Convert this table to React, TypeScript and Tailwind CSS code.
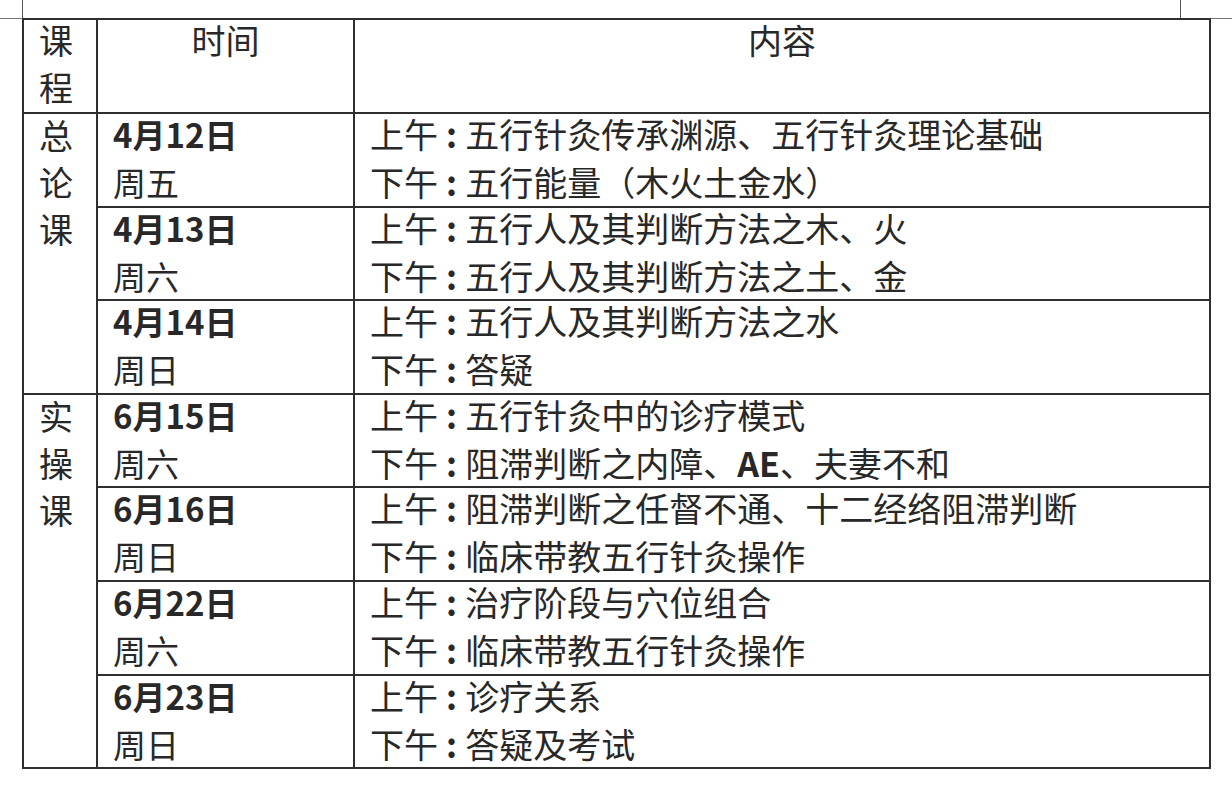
import React from 'react'

type Day = {
  date: string
  week: string
  am: React.ReactNode
  pm: React.ReactNode
}

const groups: { name: string[]; days: Day[] }[] = [
  {
    name: ['总', '论', '课'],
    days: [
      { date: '4月12日', week: '周五', am: '五行针灸传承渊源、五行针灸理论基础', pm: '五行能量（木火土金水）' },
      { date: '4月13日', week: '周六', am: '五行人及其判断方法之木、火', pm: '五行人及其判断方法之土、金' },
      { date: '4月14日', week: '周日', am: '五行人及其判断方法之水', pm: '答疑' },
    ],
  },
  {
    name: ['实', '操', '课'],
    days: [
      {
        date: '6月15日',
        week: '周六',
        am: '五行针灸中的诊疗模式',
        pm: (
          <>
            阻滞判断之内障、<b className="font-bold">AE</b>、夫妻不和
          </>
        ),
      },
      { date: '6月16日', week: '周日', am: '阻滞判断之任督不通、十二经络阻滞判断', pm: '临床带教五行针灸操作' },
      { date: '6月22日', week: '周六', am: '治疗阶段与穴位组合', pm: '临床带教五行针灸操作' },
      { date: '6月23日', week: '周日', am: '诊疗关系', pm: '答疑及考试' },
    ],
  },
]

const Label = ({ text }: { text: string }) => (
  <>
    {text}
    <span className="inline-block w-[0.8em] text-center font-bold">:</span>
  </>
)

const cell = 'border-2 border-[#2f2f2f] align-top p-0'

export default function App() {
  return (
    <div className="min-h-screen w-full bg-white text-[#282828] text-[34px] leading-[46px] font-['Noto_Sans_CJK_SC','Noto_Sans',sans-serif]">
      {/* tail of the table above */}
      <div className="w-full border-b border-[#777]">
        <div className="ml-[22px] h-[18px] w-[1159px] border-l border-r border-[#555]" />
      </div>

      <table className="ml-[22px] -mt-px w-[1188px] table-fixed border-collapse">
        <colgroup>
          <col className="w-[74px]" />
          <col className="w-[257px]" />
          <col className="w-[856px]" />
        </colgroup>
        <tbody>
          <tr className="h-[94px]">
            <td className={cell}>
              <div className="-mt-[3px] flex flex-col gap-[1px] pl-[15px]">
                <div>课</div>
                <div>程</div>
              </div>
            </td>
            <td className={cell}>
              <div className="-mt-[3px] text-center">时间</div>
            </td>
            <td className={cell}>
              <div className="-mt-[3px] text-center">内容</div>
            </td>
          </tr>
          {groups.map((g) =>
            g.days.map((d, i) => (
              <tr key={d.date} className="h-[93.6px]">
                {i === 0 && (
                  <td rowSpan={g.days.length} className={cell}>
                    <div className="-mt-[2px] flex flex-col gap-[1px] pl-[15px]">
                      {g.name.map((c) => (
                        <div key={c}>{c}</div>
                      ))}
                    </div>
                  </td>
                )}
                <td className={cell}>
                  <div className="-mt-[3px] flex flex-col gap-[2px] pl-[15px] text-[33px]">
                    <div className="font-bold">{d.date}</div>
                    <div>{d.week}</div>
                  </div>
                </td>
                <td className={cell}>
                  <div className="-mt-[3px] flex flex-col gap-[2px] pl-[15px]">
                    <div>
                      <Label text="上午" />
                      {d.am}
                    </div>
                    <div>
                      <Label text="下午" />
                      {d.pm}
                    </div>
                  </div>
                </td>
              </tr>
            ))
          )}
        </tbody>
      </table>
    </div>
  )
}
